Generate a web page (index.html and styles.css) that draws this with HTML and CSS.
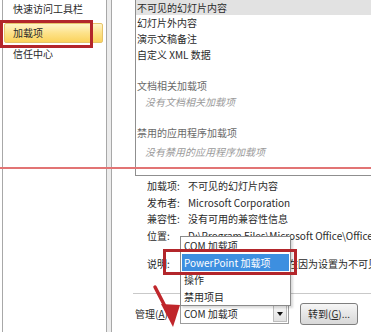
FILE: index.html
```html
<!doctype html>
<html>
    <head>
        <meta charset="utf-8">
        <link rel="stylesheet" href="styles.css">
    </head>
    <body>
        <div class="window">
            <div class="nav">
                <div class="navItem first">快速访问工具栏</div>
                <div class="navItem selected">加载项</div>
                <div class="navItem">信任中心</div>
            </div>
            <div class="splitter"></div>
            <div class="main">
                <div class="addinList">
                    <div class="row current">不可见的幻灯片内容</div>
                    <div class="row">幻灯片外内容</div>
                    <div class="row">演示文稿备注</div>
                    <div class="row">自定义 XML 数据</div>
                    <div class="row group">文档相关加载项</div>
                    <div class="row none">没有文档相关加载项</div>
                    <div class="row group">禁用的应用程序加载项</div>
                    <div class="row none second">没有禁用的应用程序加载项</div>
                </div>

                <div class="details">
                    <div class="label">加载项:</div><div class="value">不可见的幻灯片内容</div>
                    <div class="label">发布者:</div><div class="value">Microsoft Corporation</div>
                    <div class="label">兼容性:</div><div class="value">没有可用的兼容性信息</div>
                    <div class="label">位置:</div><div class="value">D:\Program Files\Microsoft Office\Office14\ADDINS</div>
                    <div class="label desc">说明:</div><div class="value desc">此加载项无法启用，现在因为设置为不可见的幻灯片内容</div>
                </div>

                <div class="divider"></div>

                <div class="manage">
                    <div class="manageLabel">管理(<u>A</u>):</div>
                    <div class="combo">
                        <span>COM 加载项</span>
                        <div class="comboBtn"><div class="tri"></div></div>
                    </div>
                    <div class="goBtn">转到(<u>G</u>)...</div>
                </div>
            </div>
        </div>

        <!-- open list of the combo -->
        <div class="dropList">
            <div class="dropItem">COM 加载项</div>
            <div class="dropItem active">PowerPoint 加载项</div>
            <div class="dropItem">操作</div>
            <div class="dropItem">禁用项目</div>
        </div>

        <!-- red marks drawn over the screenshot -->
        <div class="markLine"></div>
        <div class="mark markNav"></div>
        <div class="mark markItem"></div>
        <svg class="arrow" width="371" height="332" viewBox="0 0 371 332">
            <line x1="155" y1="287" x2="169" y2="314" stroke="#c0262b" stroke-width="3.5" stroke-linecap="round"/>
            <polygon points="161,304 180,305 173,327" fill="#c0262b"/>
        </svg>
    </body>
</html>
```

FILE: styles.css
```css
body
{
    margin: 0;
    width: 371px;
    height: 332px;
    overflow: hidden;
    position: relative;
    background: #fff;
    font-family: "Noto Sans CJK SC", "Noto Sans", sans-serif;
    font-size: 10px;
    color: #2a2a2a;
}
.window
{
    display: flex;
    height: 332px;
}
.nav
{
    flex: none;
    width: 103px;
    margin-left: 2px;
    border-left: 1px solid #a8a8a8;
    border-right: 1px solid #a8a8a8;
    white-space: nowrap;
}
.navItem
{
    height: 20px;
    line-height: 20px;
    padding-left: 10px;
}
.navItem.first
{
    height: 18px;
    line-height: 18px;
}
.navItem.selected
{
    margin: 5px 3px 1px 1px;
    height: 18px;
    line-height: 18px;
    padding-left: 8px;
    border: 1px solid #e6c46a;
    border-radius: 2px;
    background: linear-gradient(#fff4c8, #fde28a 50%, #fbd35c);
}
.splitter
{
    flex: none;
    width: 4px;
    background: #ececec;
    border-right: 1px solid #a8a8a8;
}
.main
{
    flex: 1;
    min-width: 0;
    overflow: hidden;
}
.addinList
{
    margin-left: 23px;
    height: 175px;
    border-left: 1px solid #8f8f8f;
    border-bottom: 1px solid #8f8f8f;
}
.row
{
    height: 16px;
    line-height: 16px;
    padding-left: 1px;
    white-space: nowrap;
}
.row.current
{
    height: 15px;
    line-height: 15px;
    background: #e2e2e2;
}
.row.group
{
    margin-top: 15px;
    color: #6a6a6a;
}
.row.none
{
    padding-left: 9px;
    font-style: italic;
    color: #9a9a9a;
}
.row.none.second
{
    margin-top: 3px;
}
.details
{
    display: grid;
    grid-template-columns: 41px 1fr;
    margin: 2px 0 0 35px;
    line-height: 16.7px;
    white-space: nowrap;
    overflow: hidden;
}
.details .desc
{
    margin-top: 11px;
}
.divider
{
    margin: 20px 0 0 21px;
    border-top: 1px solid #c9c9c9;
}
.manage
{
    display: flex;
    align-items: center;
    margin: 9px 0 0 23px;
}
.manageLabel
{
    flex: none;
    width: 45px;
}
.combo
{
    flex: none;
    display: flex;
    align-items: center;
    justify-content: space-between;
    box-sizing: border-box;
    width: 109px;
    height: 20px;
    padding: 0 1px 0 3px;
    border: 1px solid #9c9c9c;
    background: #fff;
}
.comboBtn
{
    display: flex;
    align-items: center;
    justify-content: center;
    width: 12px;
    height: 15px;
    border: 1px solid #bdbdbd;
    background: linear-gradient(#f7f7f7, #e2e2e2);
}
.tri
{
    width: 0;
    height: 0;
    border-left: 3px solid transparent;
    border-right: 3px solid transparent;
    border-top: 4px solid #111;
}
.goBtn
{
    flex: none;
    margin-left: 11px;
    box-sizing: border-box;
    width: 58px;
    height: 22px;
    line-height: 20px;
    text-align: center;
    border: 1px solid #7e7e7e;
    border-radius: 3px;
    background: linear-gradient(#f6f6f6, #e6e6e6 50%, #d8d8d8);
}
.dropList
{
    position: absolute;
    left: 180px;
    top: 236px;
    width: 107px;
    padding: 0 1px;
    border: 1px solid #8a8a8a;
    background: #fff;
    box-shadow: 2px 2px 2px rgba(0, 0, 0, 0.15);
}
.dropItem
{
    height: 17px;
    line-height: 17px;
    padding-left: 2px;
    white-space: nowrap;
}
.dropItem.active
{
    background: #3d8fe0;
    color: #fff;
}
.markLine
{
    position: absolute;
    left: 0;
    top: 167px;
    width: 371px;
    height: 2px;
    background: #e27474;
}
.mark
{
    position: absolute;
    box-sizing: border-box;
    border: 3px solid #b3262b;
}
.markNav
{
    left: 0;
    top: 20px;
    width: 93px;
    height: 28px;
}
.markItem
{
    left: 163px;
    top: 249px;
    width: 134px;
    height: 26px;
}
.arrow
{
    position: absolute;
    left: 0;
    top: 0;
}
```
